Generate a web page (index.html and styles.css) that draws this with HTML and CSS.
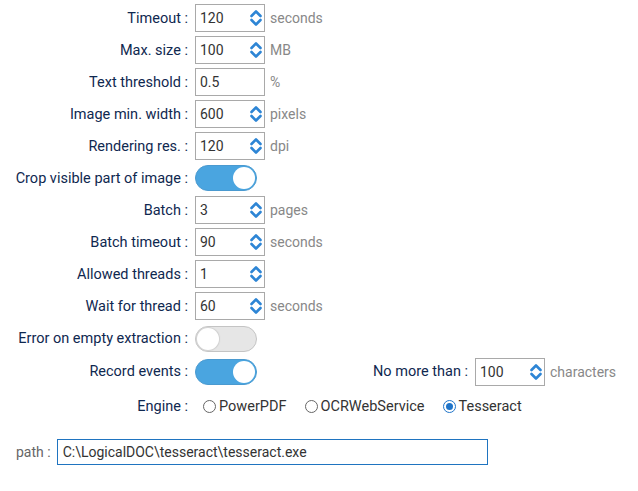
FILE: index.html
```html
<!DOCTYPE html>
<html lang="en">
<head>
    <meta charset="UTF-8">
    <title>OCR settings</title>
    <link rel="stylesheet" href="styles.css">
</head>
<body>
    <svg width="0" height="0" class="defs">
        <symbol id="spin" viewBox="0 0 12 20">
            <path d="M1.5 8 L6 3.5 L10.5 8" fill="none" stroke="currentColor" stroke-width="2.6" stroke-linecap="round" stroke-linejoin="round"/>
            <path d="M1.5 12 L6 16.5 L10.5 12" fill="none" stroke="currentColor" stroke-width="2.6" stroke-linecap="round" stroke-linejoin="round"/>
        </symbol>
    </svg>

    <div class="form">
        <div class="row">
            <label class="label">Timeout :</label>
            <div class="field"><span class="value">120</span><svg class="spin"><use href="#spin"/></svg></div>
            <span class="unit">seconds</span>
        </div>
        <div class="row">
            <label class="label">Max. size :</label>
            <div class="field"><span class="value">100</span><svg class="spin"><use href="#spin"/></svg></div>
            <span class="unit">MB</span>
        </div>
        <div class="row">
            <label class="label">Text threshold :</label>
            <div class="field"><span class="value">0.5</span></div>
            <span class="unit">%</span>
        </div>
        <div class="row">
            <label class="label">Image min. width :</label>
            <div class="field"><span class="value">600</span><svg class="spin"><use href="#spin"/></svg></div>
            <span class="unit">pixels</span>
        </div>
        <div class="row">
            <label class="label">Rendering res. :</label>
            <div class="field"><span class="value">120</span><svg class="spin"><use href="#spin"/></svg></div>
            <span class="unit">dpi</span>
        </div>
        <div class="row">
            <label class="label">Crop visible part of image :</label>
            <div class="toggle on"><span class="knob"></span></div>
        </div>
        <div class="row">
            <label class="label">Batch :</label>
            <div class="field"><span class="value">3</span><svg class="spin"><use href="#spin"/></svg></div>
            <span class="unit">pages</span>
        </div>
        <div class="row">
            <label class="label">Batch timeout :</label>
            <div class="field"><span class="value">90</span><svg class="spin"><use href="#spin"/></svg></div>
            <span class="unit">seconds</span>
        </div>
        <div class="row">
            <label class="label">Allowed threads :</label>
            <div class="field"><span class="value">1</span><svg class="spin"><use href="#spin"/></svg></div>
        </div>
        <div class="row">
            <label class="label">Wait for thread :</label>
            <div class="field"><span class="value">60</span><svg class="spin"><use href="#spin"/></svg></div>
            <span class="unit">seconds</span>
        </div>
        <div class="row tall">
            <label class="label">Error on empty extraction :</label>
            <div class="toggle"><span class="knob"></span></div>
        </div>
        <div class="row tall">
            <label class="label">Record events :</label>
            <div class="toggle on"><span class="knob"></span></div>
            <label class="label wide">No more than :</label>
            <div class="field"><span class="value">100</span><svg class="spin"><use href="#spin"/></svg></div>
            <span class="unit">characters</span>
        </div>
        <div class="row engine">
            <label class="label">Engine :</label>
            <div class="radios">
                <span class="radio"><span class="dot"></span>PowerPDF</span>
                <span class="radio"><span class="dot"></span>OCRWebService</span>
                <span class="radio checked"><span class="dot"></span>Tesseract</span>
            </div>
        </div>
    </div>

    <div class="path-row">
        <label class="path-label">path :</label>
        <div class="path-field">C:\LogicalDOC\tesseract\tesseract.exe</div>
    </div>
</body>
</html>
```

FILE: styles.css
```css
body {
    margin: 0;
    background: #fff;
    font-family: Roboto, "Liberation Sans", sans-serif;
    font-size: 14px;
    color: #333;
}

.defs {
    position: absolute;
}

.form {
    padding-top: 2px;
}

.row {
    display: flex;
    align-items: center;
    height: 32px;
}

.row.tall {
    height: 33px;
}

.label {
    width: 188px;
    text-align: right;
    font-size: 14.5px;
    color: #0f2850;
    white-space: nowrap;
}

.label.wide {
    width: 211px;
}

.field {
    box-sizing: border-box;
    width: 70px;
    height: 28px;
    margin-left: 7px;
    border: 1px solid #a9a9a9;
    display: flex;
    align-items: center;
    padding-left: 4px;
}

.value {
    flex: 1;
    color: #333;
}

.spin {
    width: 12px;
    height: 20px;
    margin-right: 2px;
    color: #2d85d5;
}

.unit {
    margin-left: 5px;
    color: #888;
}

.toggle {
    box-sizing: border-box;
    width: 62px;
    height: 26px;
    margin-left: 7px;
    border-radius: 13px;
    background: #e6e6e6;
    border: 1px solid #c4c4c4;
    position: relative;
}

.toggle .knob {
    position: absolute;
    top: 1px;
    left: 1px;
    width: 22px;
    height: 22px;
    border-radius: 50%;
    background: #fff;
    box-shadow: 0 0 1px 1px #d0d0d0;
}

.toggle.on {
    background: #4aa5e0;
    border-color: #4a9ad0;
}

.toggle.on .knob {
    left: auto;
    right: 1px;
    box-shadow: none;
}

.row.engine {
    margin-top: 2px;
}

.radios {
    display: flex;
    margin-left: 15px;
}

.radio {
    display: flex;
    align-items: center;
    margin-right: 18px;
    font-size: 14.5px;
    color: #333;
}

.radio .dot {
    box-sizing: border-box;
    width: 13px;
    height: 13px;
    border-radius: 50%;
    border: 1px solid #666;
    margin-right: 3px;
    position: relative;
}

.radio.checked .dot {
    border-color: #1f74c9;
}

.radio.checked .dot::after {
    content: "";
    position: absolute;
    top: 2px;
    left: 2px;
    width: 7px;
    height: 7px;
    border-radius: 50%;
    background: #1f74c9;
}

.path-row {
    display: flex;
    align-items: center;
    margin-top: 17px;
    padding-left: 16px;
}

.path-label {
    color: #666;
}

.path-field {
    box-sizing: border-box;
    width: 431px;
    height: 26px;
    margin-left: 6px;
    border: 1px solid #1f74c0;
    padding-left: 5px;
    line-height: 24px;
    color: #333;
}
```
